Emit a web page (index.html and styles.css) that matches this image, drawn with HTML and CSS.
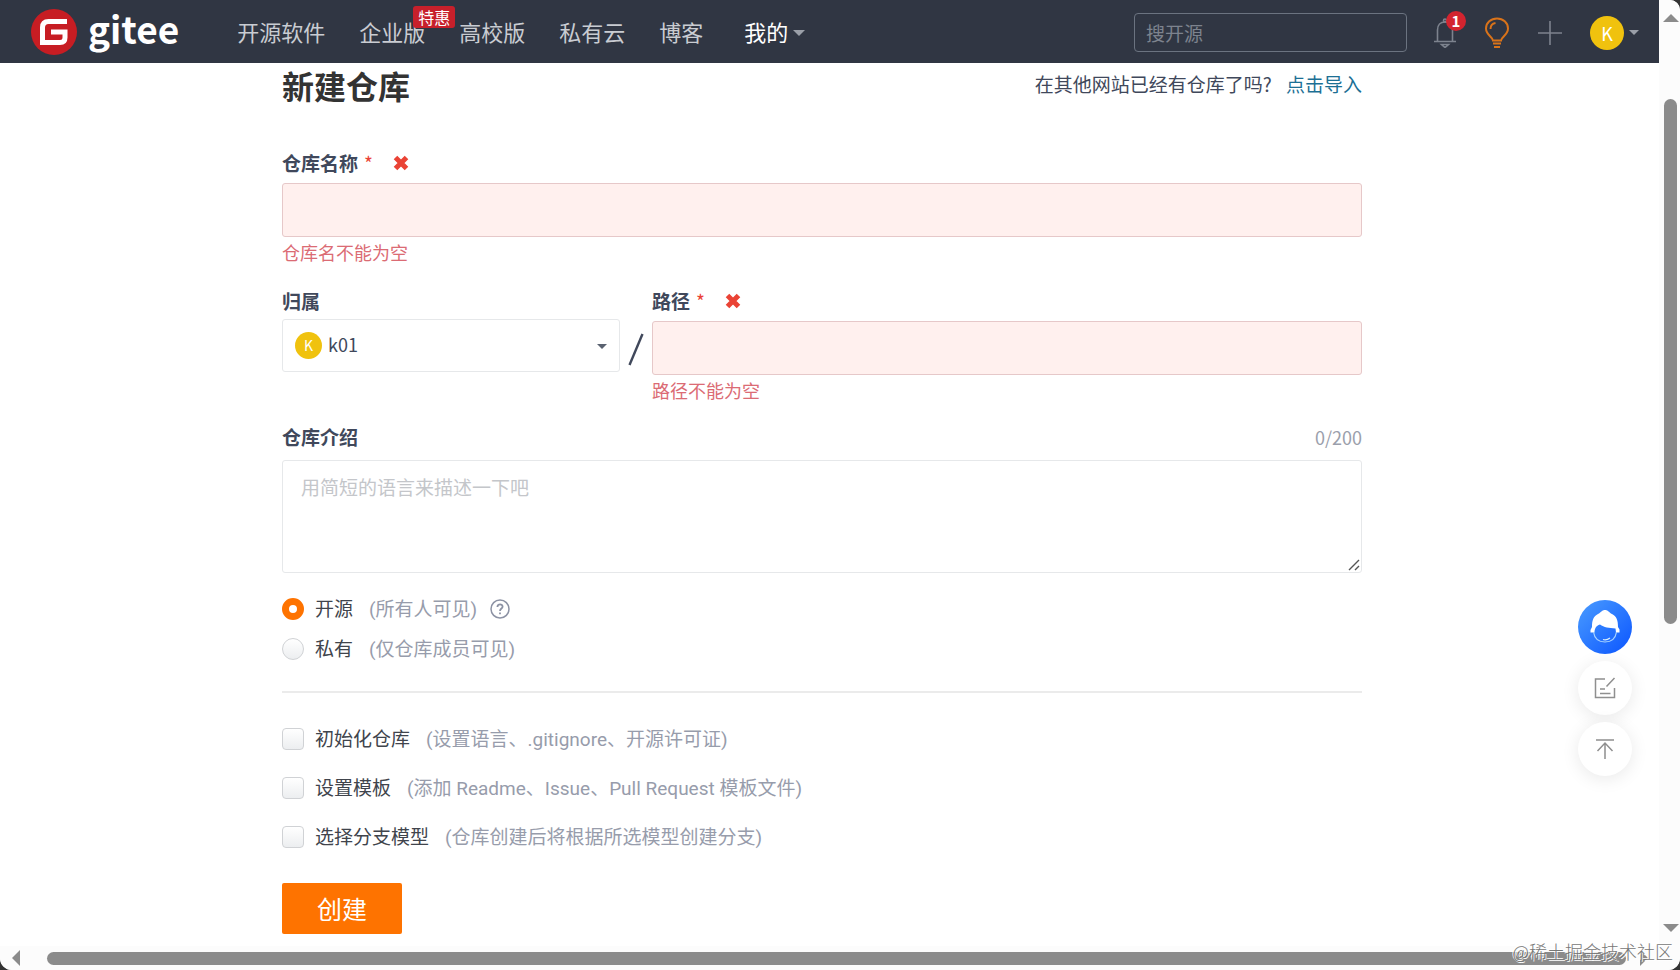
FILE: index.html
```html
<!DOCTYPE html>
<html lang="zh-CN">
<head>
<meta charset="utf-8">
<title>新建仓库 - Gitee</title>
<link rel="stylesheet" href="styles.css">
</head>
<body>
<div class="window">
  <div class="page">
    <header class="topbar">
      <a class="brand" href="#">
        <svg class="brand-mark" viewBox="0 0 46 46" aria-hidden="true">
          <circle cx="23" cy="23" r="23" fill="#c71d23"/>
          <path d="M36 12.500H17.500Q11.500 12.500 11.500 18.500V33.500H29Q34 33.500 34 28.500V23H20" fill="none" stroke="#fff" stroke-width="5"/>
        </svg>
        <span class="brand-name">gitee</span>
      </a>
      <nav class="nav">
        <a href="#">开源软件</a>
        <a class="nav-promo" href="#">企业版<span class="promo">特惠</span></a>
        <a href="#">高校版</a>
        <a href="#">私有云</a>
        <a href="#">博客</a>
        <a class="nav-mine" href="#">我的<span class="caret"></span></a>
      </nav>
      <div class="tools">
        <input class="search" type="text" placeholder="搜开源" aria-label="搜开源">
        <button class="tool bell" type="button" aria-label="通知">
          <svg width="24" height="30" viewBox="0 0 24 30" fill="none" stroke="#7d838e" stroke-width="1.600">
            <path d="M1 23.500H23M4.500 23V12C4.500 7 7.500 4 12 4S19.500 7 19.500 12V23"/>
            <circle cx="12" cy="2.500" r="1.500"/>
            <path d="M8.500 26.500H15.500L12 29.500Z"/>
          </svg>
          <span class="count">1</span>
        </button>
        <button class="tool bulb" type="button" aria-label="建议">
          <svg width="26" height="32" viewBox="0 0 26 32" fill="none" stroke="#d9731a" stroke-width="2">
            <path d="M9 23.500C9 20 2 18 2 11.500C2 5.500 7 1.500 13 1.500S24 5.500 24 11.500C24 18 17 20 17 23.500Z"/>
            <path d="M6.500 12C6.500 8.500 8.500 6.500 11.500 6M9 26.500H17M10 30H16"/>
          </svg>
        </button>
        <button class="tool plus" type="button" aria-label="新建">
          <svg width="24" height="24" viewBox="0 0 24 24" stroke="#7d838e" stroke-width="1.600"><path d="M12 0V24M0 12H24"/></svg>
        </button>
        <button class="tool user" type="button" aria-label="用户菜单"><span class="avatar">K</span><span class="caret"></span></button>
      </div>
    </header>

    <main class="main">
      <form class="form">
        <div class="title-row">
          <h1>新建仓库</h1>
          <p class="import">在其他网站已经有仓库了吗? <a href="#">点击导入</a></p>
        </div>

        <div class="field">
          <label class="label" for="name">仓库名称<span class="star">*</span>
            <svg class="cross" viewBox="0 0 16 16" aria-hidden="true"><path d="M2.500 2.500L13.500 13.500M13.500 2.500L2.500 13.500" stroke="#ea4335" stroke-width="5"/></svg>
          </label>
          <input class="text invalid" id="name" type="text">
          <p class="error">仓库名不能为空</p>
        </div>

        <div class="path-row">
          <div class="owner">
            <label class="label" for="owner">归属</label>
            <div class="select-box">
              <select id="owner"><option>k01</option></select>
              <span class="avatar small">K</span>
              <span class="caret dark"></span>
            </div>
          </div>
          <svg class="slash" viewBox="0 0 16 34" aria-hidden="true"><path d="M14.500 1L1.500 32" stroke="#40485b" stroke-width="2.400"/></svg>
          <div class="field path">
            <label class="label" for="path">路径<span class="star">*</span>
              <svg class="cross" viewBox="0 0 16 16" aria-hidden="true"><path d="M2.500 2.500L13.500 13.500M13.500 2.500L2.500 13.500" stroke="#ea4335" stroke-width="5"/></svg>
            </label>
            <input class="text invalid" id="path" type="text">
            <p class="error">路径不能为空</p>
          </div>
        </div>

        <div class="intro">
          <div class="intro-head"><label class="label" for="intro">仓库介绍</label><span class="counter">0/200</span></div>
          <div class="area-box">
            <textarea id="intro" placeholder="用简短的语言来描述一下吧"></textarea>
            <svg class="grip" viewBox="0 0 12 12" aria-hidden="true"><path d="M1 11L11 1M7 11L11 7" stroke="#555" stroke-width="1.400"/></svg>
          </div>
        </div>

        <div class="radios">
          <div class="option">
            <input type="radio" name="visibility" id="public" checked>
            <label for="public">开源<span class="hint">(所有人可见)</span></label>
            <svg class="help" viewBox="0 0 20 20" fill="none" stroke="#8c92a4" stroke-width="1.500" aria-hidden="true">
              <circle cx="10" cy="10" r="9"/>
              <path d="M7.400 8C7.400 4.400 12.800 4.600 12.600 7.800C12.500 9.600 10 9.600 10 12" stroke-width="1.800"/>
              <path d="M10 13.500V15.300" stroke-width="1.800"/>
            </svg>
          </div>
          <div class="option">
            <input type="radio" name="visibility" id="private">
            <label for="private">私有<span class="hint">(仅仓库成员可见)</span></label>
          </div>
        </div>

        <div class="checks">
          <div class="option">
            <input type="checkbox" id="init">
            <label for="init">初始化仓库<span class="hint">(设置语言、.gitignore、开源许可证)</span></label>
          </div>
          <div class="option">
            <input type="checkbox" id="template">
            <label for="template">设置模板<span class="hint">(添加 Readme、Issue、Pull Request 模板文件)</span></label>
          </div>
          <div class="option">
            <input type="checkbox" id="branch">
            <label for="branch">选择分支模型<span class="hint">(仓库创建后将根据所选模型创建分支)</span></label>
          </div>
        </div>

        <button class="submit" type="submit">创建</button>
      </form>
    </main>
  </div>

  <div class="scroll-y"><span class="arrow up"></span><span class="rail"><span class="thumb"></span></span><span class="arrow down"></span></div>
  <div class="scroll-x"><span class="arrow left"></span><span class="thumb"></span><span class="arrow right"></span></div>

  <aside class="floaters">
    <button class="float service" type="button" aria-label="客服">
      <svg width="30" height="34" viewBox="0 0 30 34">
        <path d="M15 0C12 0 11 2.500 8 4C3.500 6.500 2 10 2 17L0.500 20V22.500H4.500C4.500 19 6 15.500 10 14.500C14 17.500 19 18 25.500 18.500L26 22.500H29.500V19.500L28 17C28 10 26.500 6.500 22 4C19 2.500 18 0 15 0Z" fill="#fff"/>
        <path d="M3.500 22C4.500 28.500 9 32 15 32S25.500 28.500 26.500 22" fill="none" stroke="#a9d4ff" stroke-width="1.200"/>
        <path d="M13 29.500C16 30.500 18 29.500 20 28" fill="none" stroke="#d8efff" stroke-width="1.200"/>
      </svg>
    </button>
    <button class="float" type="button" aria-label="反馈">
      <svg width="22" height="22" viewBox="0 0 22 22" fill="none" stroke="#8f8f8f" stroke-width="1.500"><path d="M11 2H1.500V20.500H20.500V11M20.500 1L12.500 9.500M6 12H11M6 16.500H16.500"/></svg>
    </button>
    <button class="float" type="button" aria-label="返回顶部">
      <svg width="20" height="22" viewBox="0 0 20 22" fill="none" stroke="#8f8f8f" stroke-width="1.500"><path d="M1 2H19M10 21V5M2.500 13L10 5L17.500 13"/></svg>
    </button>
  </aside>
  <span class="watermark">@稀土掘金技术社区</span>
</div>
</body>
</html>
```
FILE: styles.css
```css
* { box-sizing: border-box; }

body {
  margin: 0;
  background: #333;
  color: #40485b;
  font-family: "Noto Sans CJK SC", "Open Sans", sans-serif;
  font-size: 19px;
}

h1, p { margin: 0; }
a { color: inherit; text-decoration: none; }
button, input, select, textarea { font: inherit; color: inherit; margin: 0; }
button { border: 0; padding: 0; background: none; cursor: pointer; }

.window {
  position: relative;
  display: grid;
  grid-template: minmax(0, 1fr) 24px / minmax(0, 1fr) 21px;
  height: 100vh;
  overflow: hidden;
  background: #fff;
  border-radius: 0 10px 12px 12px;
}

.page { overflow: hidden; }

/* top bar */
.topbar {
  display: flex;
  align-items: center;
  height: 63px;
  padding: 0 20px 0 31px;
  background: #303643;
}
.brand { display: flex; align-items: center; gap: 11px; color: #fff; }
.brand-mark { width: 46px; height: 46px; }
.brand-name { font-size: 37px; font-weight: 700; line-height: 46px; padding-bottom: 8px; }
.nav {
  display: flex;
  gap: 34px;
  margin-left: 58px;
  padding-bottom: 2px;
  color: #c9ccd2;
  font-size: 22px;
  line-height: 32px;
  white-space: nowrap;
}
.nav-promo { position: relative; }
.promo {
  position: absolute;
  left: 54px;
  top: -9px;
  padding: 0 5px;
  border-radius: 3px;
  background: #c7202b;
  color: #fff;
  font-size: 16px;
  line-height: 22px;
}
.nav-mine { display: flex; align-items: center; gap: 5px; margin-left: 7px; color: #fff; }
.caret {
  border: 6px solid transparent;
  border-top-color: #9a9fa8;
  border-bottom: 0;
}
.nav-mine .caret { margin-top: 4px; }
.tools { display: flex; align-items: center; margin-left: auto; padding-top: 2px; }
.search {
  width: 273px;
  height: 39px;
  padding: 0 11px;
  border: 1px solid #6b7380;
  border-radius: 4px;
  background: transparent;
  color: #fff;
}
.search::placeholder { color: #7d838e; opacity: 1; }
.tool { display: flex; align-items: center; }
.bell { position: relative; margin-left: 26px; }
.count {
  position: absolute;
  left: 13px;
  top: -7px;
  width: 20px;
  height: 20px;
  border-radius: 50%;
  background: #d3242f;
  color: #fff;
  font-size: 15px;
  font-weight: 700;
  line-height: 20px;
  text-align: center;
}
.bulb { margin-left: 27px; }
.plus { margin-left: 28px; }
.user { margin-left: 28px; gap: 5px; }
.user .caret { border-width: 5px 5px 0; }
.avatar {
  display: block;
  width: 34px;
  height: 34px;
  border-radius: 50%;
  background: #f0c20e;
  color: #fff;
  font-size: 18px;
  line-height: 34px;
  text-align: center;
}

/* form */
.main { padding: 0 15px 12px 0; }
.form { width: 1080px; max-width: 100%; margin: 0 auto; }
.title-row { display: flex; justify-content: space-between; margin-bottom: 42px; }
h1 { color: #333; font-size: 32px; line-height: 44px; }
.import { line-height: 42px; }
.import a { margin-left: 10px; color: #1c6f94; }

.label { display: flex; align-items: center; font-weight: 700; line-height: 28px; }
.star { margin-left: 6px; color: #ea4335; font-weight: 400; }
.cross { width: 16px; height: 16px; margin-left: 20px; }
.text {
  display: block;
  width: 100%;
  height: 54px;
  margin: 6px 0 4px;
  padding: 0 18px;
  border: 1px solid #e6c8c9;
  border-radius: 3px;
}
.invalid { background: #fff0ee; }
.error { color: #db6b74; font-size: 18px; line-height: 22px; }

.path-row { display: grid; grid-template-columns: 338px 16px minmax(0, 1fr); column-gap: 8px; margin: 24px 0 22px; }
.slash { width: 16px; height: 34px; margin-top: 46px; }
.select-box { position: relative; margin-top: 4px; }
.select-box select {
  display: block;
  width: 100%;
  height: 53px;
  padding: 0 40px 4px 45px;
  border: 1px solid #e6e8ea;
  border-radius: 3px;
  background: #fff;
  font-size: 18px;
  appearance: none;
}
.small { position: absolute; left: 13px; top: 13px; width: 27px; height: 27px; font-size: 14px; line-height: 27px; }
.dark { position: absolute; right: 13px; top: 25px; border-width: 5px 5px 0; border-top-color: #5a6270; }

.intro-head { display: flex; justify-content: space-between; }
.counter { color: #9b9fac; font-size: 18px; line-height: 28px; }
.area-box { position: relative; margin-top: 9px; }
textarea {
  display: block;
  width: 100%;
  height: 113px;
  padding: 12px 18px;
  border: 1px solid #e6e8ea;
  border-radius: 3px;
  line-height: 28px;
  resize: none;
}
textarea::placeholder { color: #c4c6ca; opacity: 1; }
.grip { position: absolute; right: 2px; bottom: 2px; width: 12px; height: 12px; }

.option { display: flex; align-items: center; color: #40444c; }
.option label { margin-left: 11px; line-height: 28px; }
.hint { margin-left: 16px; color: #979cab; font-family: Roboto, "Noto Sans CJK SC", sans-serif; }
.radios { padding: 16px 0 22px; border-bottom: 2px solid #ebebeb; }
.radios .option { height: 40px; }
.checks { padding: 21px 0 22px; }
.checks .option { height: 49px; }
.option input {
  width: 22px;
  height: 22px;
  border: 1px solid #d0d2d5;
  border-radius: 4px;
  background: linear-gradient(#fff, #eceef0);
  appearance: none;
}
.option input[type="radio"] { border-radius: 50%; }
.option input[type="radio"]:checked { border: 7px solid #fe7300; background: #fff; }
.help { width: 20px; height: 20px; margin-left: 13px; }
.submit {
  display: block;
  padding: 0 35px 1px;
  border-radius: 2px;
  background: #fe7300;
  color: #fff;
  font-size: 25px;
  line-height: 50px;
}

/* scroll bars */
.scroll-y { display: flex; flex-direction: column; align-items: center; padding: 14px 0 14px 2px; background: #fcfcfc; }
.rail { display: block; flex: 1; width: 13px; padding-top: 77px; }
.scroll-y .thumb { display: block; width: 13px; height: 525px; max-height: 70%; }
.thumb { border-radius: 7px; background: #8b8b8b; }
.scroll-x { grid-column: 1 / -1; display: flex; align-items: center; padding: 0 32px 0 12px; background: #fcfcfc; }
.scroll-x .thumb { flex: 1; height: 13px; margin: 0 14px 0 27px; }
.arrow { border: 8px solid transparent; }
.up { border-top: 0; border-bottom-color: #8b8b8b; }
.down { border-bottom: 0; border-top-color: #8b8b8b; }
.left { border-left: 0; border-right-color: #8b8b8b; }
.right { border-right: 0; border-left-color: #8b8b8b; }

/* floating actions */
.floaters { position: absolute; right: 48px; top: 600px; display: flex; flex-direction: column; gap: 7px; }
.float {
  display: flex;
  align-items: center;
  justify-content: center;
  width: 54px;
  height: 54px;
  border-radius: 50%;
  background: #fff;
  box-shadow: 0 3px 18px rgba(0, 0, 0, 0.09);
}
.service { background: linear-gradient(135deg, #4a9cff, #0b55ff); box-shadow: none; }

.watermark {
  position: absolute;
  right: 7px;
  bottom: 6px;
  color: #777;
  font-size: 18px;
  font-weight: 300;
  line-height: 26px;
  text-shadow: 1px 1px 0 #fff, -1px -1px 0 #fff;
}
```
